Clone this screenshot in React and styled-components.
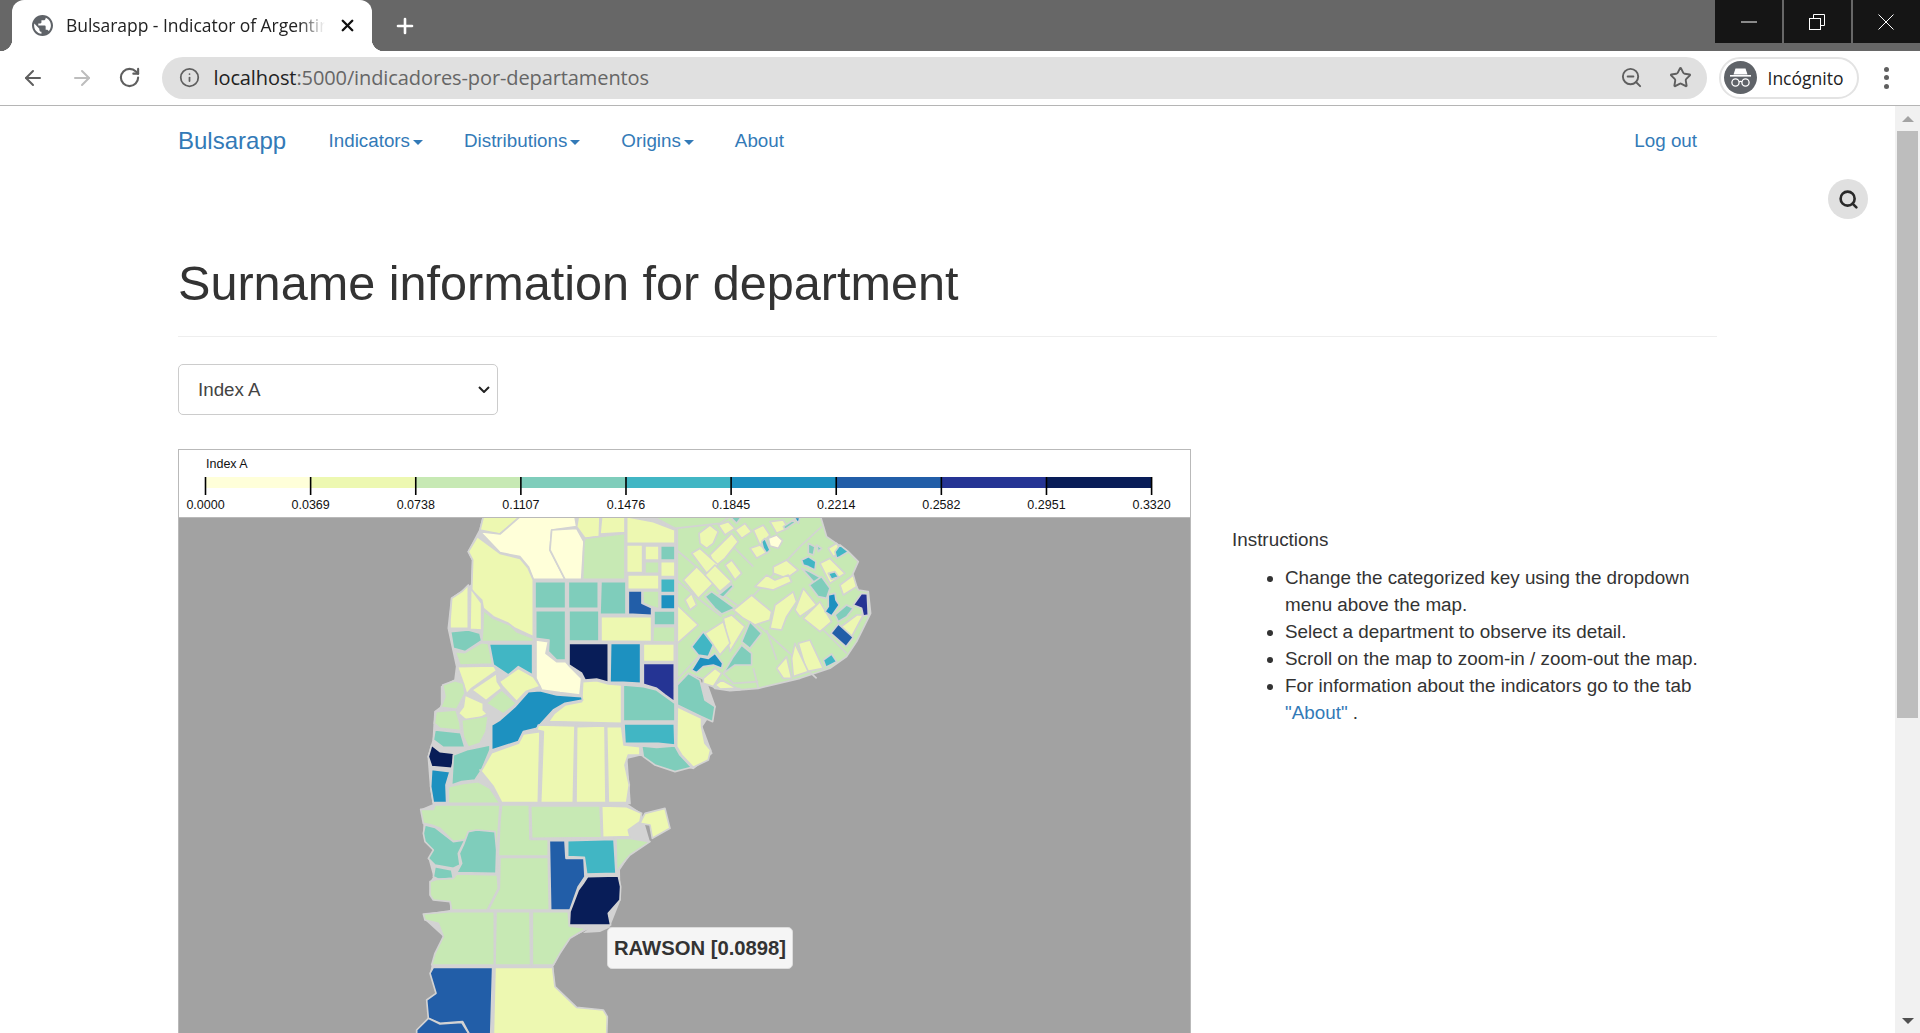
import React from "react";
import styled, { createGlobalStyle } from "styled-components";
import { ArrowLeft, ArrowRight, RotateCw, Info, ZoomOut, Star, Search, Plus, X } from "lucide-react";

const C = { a: "#ffffd9", b: "#edf8b1", c: "#c7e9b4", d: "#7fcdbb", e: "#41b6c4", f: "#1d91c0", g: "#225ea8", h: "#253494", i: "#081d58" };
const RAMP = ["#ffffd9", "#edf8b1", "#c7e9b4", "#7fcdbb", "#41b6c4", "#1d91c0", "#225ea8", "#253494", "#081d58"];
const LABELS = ["0.0000", "0.0369", "0.0738", "0.1107", "0.1476", "0.1845", "0.2214", "0.2582", "0.2951", "0.3320"];

const LAND = "250,20 240,60 205,125 218,150 215,225 155,265 145,355 170,470 165,510 125,530 125,590 105,605 100,690 85,740 92,830 100,880 690,880 680,745 720,735 880,775 935,730 905,650 945,590 920,520 832,520 830,20";
const LAND_SOUTH = "62,118 105,100 680,100 725,130 750,215 690,255 660,300 662,390 630,470 560,480 510,505 480,550 460,590 465,650 530,712 610,720 622,740 620,800 50,800 50,780 85,745 80,690 108,670 90,610 95,585 130,500 75,450 70,432 150,420 150,395 90,375 90,335 100,320 85,265 100,240 70,190 70,160";

const PAMPA_BASE = ["c", "832,20 1262,20 1280,80 1345,125 1375,155 1355,200 1375,240 1405,245 1412,310 1370,395 1340,440 1290,475 1200,505 1075,535 990,542 945,535 925,515 905,505 865,490 832,525"];

const NORTH = [
  ["b", "250,20 360,20 300,72 240,60"],
  ["a", "240,65 300,72 360,20 525,20 530,50 455,60 450,120 495,208 400,208 385,170 360,140 300,128"],
  ["a", "455,60 530,55 552,95 545,208 495,208 450,120"],
  ["b", "535,20 600,20 598,80 555,85 530,50"],
  ["b", "605,20 675,20 675,68 600,72"],
  ["b", "680,20 760,35 825,60 825,100 680,100"],
  ["c", "760,20 990,20 960,40 825,55"],
  ["c", "555,85 675,70 675,208 548,208 552,95"],
  ["b", "680,105 728,105 728,188 680,188"],
  ["b", "735,108 777,108 777,150 735,150"],
  ["d", "782,108 825,108 825,150 782,150"],
  ["c", "735,155 777,155 777,190 735,190"],
  ["b", "782,155 825,155 825,200 782,200"],
  ["b", "683,195 777,195 777,238 683,238"],
  ["e", "782,206 825,206 825,248 782,248"],
  ["f", "782,253 825,253 825,297 782,297"],
  ["c", "728,243 777,243 777,297 755,290 730,280"],
  ["g", "685,243 726,243 726,280 755,293 755,316 685,312"],
  ["d", "762,303 825,303 825,345 762,345"],
  ["c", "760,350 825,350 825,397 758,395"],
  ["b", "603,320 755,320 755,395 603,393"],
  ["d", "405,215 497,215 497,295 405,295"],
  ["d", "505,215 595,215 595,295 505,295"],
  ["d", "603,215 678,215 678,313 600,313"],
  ["d", "407,302 497,302 497,450 470,450 445,425 447,390 407,385"],
  ["d", "507,302 597,302 597,393 507,393"],
  ["b", "232,80 300,130 360,145 385,175 400,210 400,380 345,355 325,340 280,320 250,295 245,270 215,240 218,150 205,125"],
  ["b", "150,330 155,265 185,245 205,225 205,355 150,355"],
  ["b", "212,235 245,280 245,360 210,358"],
  ["c", "250,300 280,325 330,345 350,365 400,385 400,395 245,395 248,360"],
  ["d", "152,365 205,360 240,370 245,392 195,425 160,415"],
  ["c", "165,425 195,428 245,398 265,400 278,462 180,465"],
  ["e", "268,402 398,402 398,495 355,470 325,495 280,465"],
  ["a", "408,390 445,395 438,430 470,455 497,455 510,470 545,505 540,555 480,548 425,540 408,505"],
  ["i", "507,400 625,400 625,517 590,507 555,510 545,490 507,465"],
  ["f", "632,400 722,400 722,520 670,517 630,517"],
  ["b", "730,402 823,402 823,455 730,455"],
  ["h", "730,460 823,460 823,575 795,555 770,535 730,523"],
  ["b", "172,470 282,468 290,482 215,535 200,552 188,515"],
  ["b", "290,490 215,540 258,572 305,535 292,515"],
  ["b", "298,515 355,475 400,500 420,530 378,545 350,575 308,530"],
  ["c", "305,540 350,580 310,612 258,580"],
  ["b", "195,555 250,580 250,600 262,612 210,640 175,610 190,590"],
  ["c", "128,525 165,512 190,520 195,550 170,598 122,592 135,560"],
  ["c", "108,605 168,600 180,640 182,662 120,655 103,640"],
  ["d", "105,660 182,668 195,712 130,712 100,690"],
  ["c", "185,630 265,618 258,665 240,700 205,712 190,680"],
  ["b", "445,635 463,610 495,585 545,575 548,515 590,512 625,522 665,525 665,640"],
  ["f", "275,645 300,630 345,590 385,545 420,542 470,555 545,560 548,570 495,580 460,600 410,655 370,665 355,695 275,720"],
  ["i", "95,705 120,725 165,730 155,775 95,770 85,740"],
  ["f", "95,778 150,785 138,825 140,878 100,878 92,830"],
  ["d", "160,735 205,718 270,705 270,720 245,780 225,810 185,815 155,825"],
  ["b", "245,780 275,728 355,700 370,672 420,665 415,878 305,878 280,830 240,780"],
  ["b", "415,645 525,648 520,878 422,878 430,665 410,660"],
  ["b", "530,650 615,648 618,878 528,878"],
  ["b", "620,650 665,650 672,705 720,710 720,735 685,735 675,765 688,825 680,878 625,878"],
  ["d", "670,525 730,530 770,540 825,580 825,633 670,633"],
  ["e", "672,642 823,642 825,705 775,700 675,700"],
  ["d", "725,708 770,712 825,708 840,735 875,772 825,785 765,765 730,740"],
  ["b", "832,590 905,625 905,650 915,700 932,720 925,750 880,772 845,735 830,710"],
  ["d", "832,525 865,490 900,510 915,570 945,590 938,635 905,620 832,585"],
  ["b", "832,285 895,345 832,400"],
];

const PAMPA_TINTED = [
  ["a", "1105,85 1130,75 1148,92 1135,115 1110,108"],
  ["e", "1085,95 1095,85 1110,120 1100,130 1090,115"],
  ["d", "1150,50 1180,30 1185,38 1155,58"],
  ["f", "1182,22 1200,22 1195,40"],
  ["d", "990,20 1025,20 1010,40"],
  ["e", "1305,125 1320,105 1345,125 1320,140 1310,145"],
  ["e", "1205,150 1225,140 1248,155 1245,180 1225,170 1210,165"],
  ["d", "1205,175 1230,185 1265,205 1245,220"],
  ["d", "1228,225 1265,200 1290,235 1280,265 1255,260"],
  ["d", "1225,100 1245,110 1240,135 1225,130"],
  ["d", "1250,105 1265,115 1255,125"],
  ["e", "1285,190 1305,185 1315,200 1295,208"],
  ["d", "955,255 995,222 1000,230 970,262"],
  ["d", "915,260 935,245 1005,295 965,312 945,295"],
  ["f", "1285,255 1305,250 1308,270 1318,285 1295,318 1275,305 1285,290"],
  ["d", "1305,315 1340,285 1360,295 1340,320 1315,335"],
  ["h", "1360,285 1385,250 1402,252 1405,315 1390,318 1385,295"],
  ["g", "1293,370 1315,342 1360,382 1338,410"],
  ["e", "1270,450 1295,432 1310,455 1278,472"],
  ["d", "1025,395 1050,335 1085,370 1050,415"],
  ["d", "970,490 1000,440 1025,405 1055,430 1055,465 1005,465"],
  ["e", "875,410 910,365 940,405 925,440 895,435"],
  ["f", "875,480 900,440 925,445 945,430 968,460 965,475 940,465 910,470 890,488"],
  ["h", "998,536 1020,536 1020,539 998,539"],
];

const PAMPA_PALE = [
  "117,55 150,30 175,50 160,85 140,100 120,85",
  "150,120 215,55 235,80 195,130 165,155",
  "95,115 120,100 175,150 140,175",
  "70,195 110,155 160,205 115,250",
  "135,180 165,150 215,200 180,230",
  "195,150 215,135 245,175 225,195",
  "280,45 310,30 330,60 300,90",
  "270,100 300,90 325,110 290,130",
  "330,20 370,15 385,40 350,55",
  "340,155 380,135 415,165 380,190 340,175",
  "285,215 320,180 345,195 385,180 395,200 340,225",
  "220,285 275,240 335,290 330,315 285,330 250,310",
  "330,340 345,270 400,230 410,260 380,305 365,345",
  "405,285 430,220 470,270 420,305",
  "430,310 480,260 515,320 480,350",
  "190,310 215,300 255,335 210,410",
  "135,355 190,320 210,385 180,420",
  "480,145 510,130 555,175 510,205",
  "530,345 590,300 610,300 570,375",
  "415,385 450,375 490,460 440,470",
  "350,460 380,425 395,490 370,490",
  "395,430 405,385 445,470 400,485",
  "75,255 95,235 110,270 90,285",
  "130,490 165,460 185,475 160,515 130,505",
  "165,510 185,495 230,520 180,522",
  "225,45 255,25 275,50 245,70",
  "175,30 205,20 225,40 195,60",
  "505,100 530,85 545,110 520,125",
  "540,210 580,180 590,215 550,240",
].map((pts) => [
  "b",
  pts.split(" ").map((p) => {
    const [x, y] = p.split(",").map(Number);
    return `${x + 780},${y + 15}`;
  }).join(" "),
]);

const ROADS = [
  "830,510 905,430 1000,320 1100,215 1200,110 1265,50",
  "1190,280 1290,380 1340,430",
  "1080,350 1180,440 1250,505",
  "950,240 1030,300 1080,350",
  "830,210 900,270 965,320",
  "830,120 895,175",
  "1060,475 1075,535",
  "970,490 1000,520 1075,515",
  "1100,360 1130,450",
  "1000,110 1060,170",
];

const SOUTH = [
  ["c", "145,100 145,50 190,40 235,35 270,55 300,100"],
  ["c", "62,118 100,118 105,105 300,105 290,255 290,308 170,308 190,245 210,185 195,210 160,215 120,175 95,165 70,160"],
  ["d", "70,190 75,165 105,172 160,215 195,210 175,250 180,285 160,295 105,285 85,265 100,240 75,215"],
  ["d", "205,185 230,180 285,185 290,240 288,310 170,308 185,280 178,250 190,225"],
  ["d", "105,290 155,300 160,325 115,328 100,320"],
  ["c", "90,335 110,328 160,325 170,312 292,315 295,355 262,420 155,420 150,395 100,390 90,375"],
  ["c", "305,105 388,105 390,208 445,208 445,258 295,258 300,150"],
  ["c", "392,108 600,108 605,203 395,205"],
  ["b", "605,108 680,110 725,130 720,155 685,180 690,200 608,202"],
  ["b", "735,130 795,115 810,175 757,205 750,165 720,160 725,150"],
  ["c", "648,205 690,205 750,215 690,255 660,290 650,310"],
  ["g", "448,212 495,212 498,265 552,265 555,320 535,350 510,420 452,420"],
  ["e", "503,212 642,208 648,310 560,312 553,262 503,260"],
  ["i", "563,320 655,318 662,350 660,390 625,430 632,465 508,465 510,425 535,360 550,340"],
  ["c", "300,262 445,262 448,420 265,420 298,355"],
  ["c", "70,432 150,425 283,425 283,585 95,585 105,550 130,500 115,460 75,450"],
  ["c", "288,425 390,425 392,585 285,585"],
  ["c", "397,425 505,425 508,468 560,475 510,505 480,550 460,585 397,585"],
  ["g", "100,592 278,592 272,800 212,800 188,755 120,760 85,745 80,690 108,670 90,610"],
  ["g", "50,800 50,780 85,745 120,762 185,757 212,800"],
  ["b", "285,592 458,592 465,650 530,712 610,720 622,740 620,800 280,800"],
];

const GlobalStyle = createGlobalStyle`
  html, body { margin: 0; height: 100%; overflow: hidden; background: #fff; }
  #root { height: 100%; }
  * { box-sizing: border-box; }
`;

const Shell = styled.div`
  height: 100vh;
  display: flex;
  flex-direction: column;
  overflow: hidden;
  font-family: "Liberation Sans", Arial, sans-serif;
  color: #333;
`;
const TabStrip = styled.div`
  height: 51px;
  flex: none;
  background: #676767;
  display: flex;
  padding-left: 12px;
`;
const Tab = styled.div`
  position: relative;
  width: 360px;
  height: 51px;
  background: #fff;
  border-radius: 12px 12px 0 0;
  display: flex;
  align-items: center;
  padding: 0 15px 0 20px;
  gap: 13px;
  &::before, &::after {
    content: "";
    position: absolute;
    bottom: 0;
    width: 12px;
    height: 12px;
  }
  &::before { left: -12px; background: radial-gradient(circle at 0 0, transparent 12px, #fff 12.5px); }
  &::after { right: -12px; background: radial-gradient(circle at 100% 0, transparent 12px, #fff 12.5px); }
`;
const TabTitle = styled.span`
  flex: 1;
  padding-bottom: 2px;
  font: 400 17.5px "Open Sans", sans-serif;
  letter-spacing: -0.05px;
  color: #222;
  white-space: nowrap;
  overflow: hidden;
  -webkit-mask-image: linear-gradient(90deg, #000 90%, transparent 100%);
  mask-image: linear-gradient(90deg, #000 90%, transparent 100%);
`;
const NewTab = styled.div`
  width: 66px;
  display: flex;
  align-items: center;
  justify-content: center;
  color: #fff;
`;
const WindowControls = styled.div`
  margin-left: auto;
  display: flex;
  gap: 2px;
  height: 43px;
`;
const WindowButton = styled.div`
  width: 67px;
  height: 43px;
  padding-right: ${(p) => p.$nudge || 0}px;
  background: #151515;
  display: flex;
  align-items: center;
  justify-content: center;
`;
const Toolbar = styled.div`
  height: 55px;
  flex: none;
  border-bottom: 1px solid #b5b5b5;
  display: flex;
  align-items: center;
  padding: 0 0 1px 21px;
`;
const NavIcon = styled.div`
  width: 24px;
  height: 24px;
  margin-right: 24.5px;
  color: ${(p) => p.$color || "#5f5f5f"};
  display: flex;
`;
const Omnibox = styled.div`
  width: 1545px;
  margin-left: -5px;
  height: 42px;
  border-radius: 21px;
  background: #e0e0e0;
  display: flex;
  align-items: center;
  padding: 0 15px 0 17px;
  color: #5f5f5f;
`;
const Url = styled.div`
  flex: 1;
  margin-left: 14px;
  font: 400 20px "Open Sans", sans-serif;
  color: #666;
  letter-spacing: -0.1px;
  b { font-weight: 400; color: #222; }
`;
const OmniAction = styled.div`
  display: flex;
  margin-left: ${(p) => p.$gap}px;
`;
const IncognitoPill = styled.div`
  width: 140px;
  height: 42px;
  margin-left: 12px;
  border: 2px solid #e3e3e3;
  border-radius: 21px;
  display: flex;
  align-items: center;
  padding-left: 3px;
  gap: 11px;
  font: 400 17.5px "Open Sans", sans-serif;
  color: #222;
`;
const MenuDots = styled.div`
  margin-left: 25px;
  display: flex;
  flex-direction: column;
  gap: 3.5px;
  span { width: 5px; height: 5px; border-radius: 50%; background: #5f5f5f; }
`;
const Viewport = styled.div`
  flex: 1;
  min-height: 0;
  display: flex;
`;
const Page = styled.div`
  position: relative;
  flex: 1;
  min-width: 0;
  overflow: hidden;
  padding-left: 178px;
`;
const Container = styled.div`
  width: 1539px;
`;
const Navbar = styled.nav`
  height: 70px;
  display: flex;
  align-items: center;
  padding-left: 0;
  padding-right: 20px;
`;
const Brand = styled.a`
  font-size: 24px;
  color: #337ab7;
  margin-right: 42.5px;
`;
const NavLink = styled.a`
  font-size: 18.8px;
  color: #337ab7;
  margin-right: ${(p) => p.$gap}px;
  margin-left: ${(p) => (p.$push ? "auto" : "0")};
  display: flex;
  align-items: center;
  ${(p) => p.$caret && `
    &::after {
      content: "";
      margin-left: 3px;
      margin-top: 2px;
      border-top: 5px solid #337ab7;
      border-left: 5px solid transparent;
      border-right: 5px solid transparent;
    }
  `}
`;
const SearchFab = styled.div`
  position: absolute;
  right: 27px;
  top: 73px;
  width: 40px;
  height: 40px;
  border-radius: 50%;
  background: #e0e0e0;
  color: #2a2a2a;
  display: flex;
  align-items: center;
  justify-content: center;
`;
const Title = styled.h1`
  margin: 0;
  padding: 0 0 23px;
  height: 161px;
  display: flex;
  align-items: flex-end;
  font-size: 48.6px;
  font-weight: 400;
  line-height: 60px;
  color: #333;
  border-bottom: 1px solid #eee;
`;
const SelectWrap = styled.div`
  position: relative;
  margin-top: 27px;
  width: 320px;
  height: 51px;
`;
const Select = styled.select`
  display: block;
  appearance: none;
  width: 100%;
  height: 100%;
  border: 1px solid #ccc;
  border-radius: 5px;
  background: #fff;
  padding-left: 19px;
  font: 400 18.75px "Liberation Sans", Arial, sans-serif;
  color: #444;
`;
const Chevron = styled.svg`
  position: absolute;
  right: 8px;
  top: 22px;
  width: 12px;
  height: 7px;
  pointer-events: none;
`;
const ContentRow = styled.div`
  margin-top: 34px;
  display: flex;
  gap: 41px;
`;
const MapFrame = styled.div`
  position: relative;
  width: 1013px;
  flex: none;
  border: 1px solid #b9b9b9;
  border-bottom: 0;
`;
const Legend = styled.svg`
  display: block;
  width: 1011px;
  height: 68px;
  border-bottom: 1px solid #b9b9b9;
  font-family: "Liberation Sans", Arial, sans-serif;
`;
const MapCanvas = styled.svg`
  display: block;
  width: 1011px;
  height: 515px;
  background: #a2a2a2;
`;
const Tooltip = styled.div`
  position: absolute;
  left: 428px;
  top: 477px;
  width: 186px;
  height: 42px;
  background: rgba(247, 247, 247, 0.98);
  border: 1px solid #dcdcdc;
  border-radius: 5px;
  font-size: 20.25px;
  font-weight: 700;
  color: #333;
  display: flex;
  align-items: center;
  justify-content: center;
  white-space: nowrap;
`;
const Panel = styled.div`
  flex: 1;
  padding-top: 77px;
  font-size: 18.85px;
  line-height: 27px;
  color: #333;
`;
const List = styled.ul`
  margin: 11px 0 0;
  padding-left: 53px;
  a { color: #337ab7; }
`;
const ScrollBar = styled.div`
  width: 25px;
  flex: none;
  background: #f1f1f1;
  display: flex;
  flex-direction: column;
  align-items: center;
`;
const ScrollArrow = styled.div`
  height: 25px;
  flex: none;
  display: flex;
  align-items: center;
  justify-content: center;
  ${(p) => (p.$down ? "margin-top: auto;" : "")}
  &::before {
    content: "";
    border-left: 6px solid transparent;
    border-right: 6px solid transparent;
    ${(p) => (p.$down ? "border-top: 6px solid #505050;" : "border-bottom: 6px solid #a3a3a3;")}
  }
`;
const ScrollThumb = styled.div`
  width: 21px;
  height: 587px;
  background: #bdbdbd;
  flex: none;
`;

const Globe = () => (
  <svg width="21" height="21" viewBox="2 2 20 20" fill="#5f6368">
    <path d="M12 2C6.48 2 2 6.48 2 12s4.48 10 10 10 10-4.48 10-10S17.52 2 12 2zm-1 17.93c-3.95-.49-7-3.85-7-7.93 0-.62.08-1.21.21-1.79L9 15v1c0 1.1.9 2 2 2v1.93zm6.9-2.54c-.26-.81-1-1.39-1.9-1.39h-1v-3c0-.55-.45-1-1-1H8v-2h2c.55 0 1-.45 1-1V7h2c1.1 0 2-.9 2-2v-.41c2.93 1.19 5 4.06 5 7.41 0 2.08-.8 3.97-2.1 5.39z" />
  </svg>
);

const Incognito = () => (
  <svg width="33" height="33" viewBox="0 0 33 33">
    <circle cx="16.5" cy="16.5" r="16.5" fill="#5f6368" />
    <path d="M11.5 7.5h10l2 6h-14z" fill="#fff" />
    <rect x="6" y="14" width="21" height="1.6" fill="#fff" />
    <circle cx="11.5" cy="21.5" r="3.6" fill="none" stroke="#fff" strokeWidth="1.3" />
    <circle cx="21.5" cy="21.5" r="3.6" fill="none" stroke="#fff" strokeWidth="1.3" />
    <path d="M15 20.8q1.5-1 3 0" fill="none" stroke="#fff" strokeWidth="1.3" />
  </svg>
);

const Regions = ({ items }) =>
  items.map(([k, pts], i) => (
    <polygon key={i} points={pts} fill={C[k]} stroke="#d3d3d3" strokeWidth="5" strokeLinejoin="round" />
  ));

const step = (1151.6 - 205.5) / 9;

const App = () => (
  <>
    <GlobalStyle />
    <Shell>
      <TabStrip>
        <Tab>
          <Globe />
          <TabTitle>Bulsarapp - Indicator of Argentina</TabTitle>
          <X size={19} strokeWidth={3} color="#111" />
        </Tab>
        <NewTab><Plus size={24} strokeWidth={2.6} /></NewTab>
        <WindowControls>
          <WindowButton>
            <svg width="16" height="2" viewBox="0 0 16 2"><path d="M0 1h16" stroke="#fff" /></svg>
          </WindowButton>
          <WindowButton $nudge={2}>
            <svg width="16" height="16" viewBox="0 0 16 16" fill="none" stroke="#fff">
              <rect x="0.5" y="4.5" width="11" height="11" />
              <path d="M4.5 4.5v-4h11v11h-4" />
            </svg>
          </WindowButton>
          <WindowButton $nudge={2}>
            <svg width="16" height="16" viewBox="0 0 16 16" stroke="#fff"><path d="M.5.5l15 15M15.5.5l-15 15" /></svg>
          </WindowButton>
        </WindowControls>
      </TabStrip>
      <Toolbar>
        <NavIcon><ArrowLeft size={24} strokeWidth={2} /></NavIcon>
        <NavIcon $color="#bdbdbd"><ArrowRight size={24} strokeWidth={2} /></NavIcon>
        <NavIcon><RotateCw size={23} strokeWidth={2.2} /></NavIcon>
        <Omnibox>
          <Info size={21} strokeWidth={2} />
          <Url><b>localhost</b>:5000/indicadores-por-departamentos</Url>
          <OmniAction $gap={24}><ZoomOut size={23} strokeWidth={2} /></OmniAction>
          <OmniAction $gap={26}><Star size={23} strokeWidth={2} /></OmniAction>
        </Omnibox>
        <IncognitoPill><Incognito />Incógnito</IncognitoPill>
        <MenuDots><span /><span /><span /></MenuDots>
      </Toolbar>
      <Viewport>
        <Page>
          <Container>
            <Navbar>
              <Brand>Bulsarapp</Brand>
              <NavLink $caret $gap={41}>Indicators</NavLink>
              <NavLink $caret $gap={41}>Distributions</NavLink>
              <NavLink $caret $gap={41}>Origins</NavLink>
              <NavLink>About</NavLink>
              <NavLink $push>Log out</NavLink>
            </Navbar>
            <Title>Surname information for department</Title>
            <SelectWrap>
              <Select defaultValue="a"><option value="a">Index A</option></Select>
              <Chevron viewBox="0 0 12 7" fill="none" stroke="#222" strokeWidth="2"><path d="M1 1l5 5 5-5" /></Chevron>
            </SelectWrap>
            <ContentRow>
              <MapFrame>
                <Legend viewBox="179 450 1011 67">
                  <text x="206" y="468" fontSize="12.5" fill="#111">Index A</text>
                  {RAMP.map((c, i) => (
                    <rect key={c} x={205.5 + i * step} y="477" width={step} height="11" fill={c} />
                  ))}
                  {LABELS.map((l, i) => (
                    <g key={l}>
                      <line x1={205.5 + i * step} x2={205.5 + i * step} y1="477" y2="495" stroke="#000" strokeWidth="1.6" />
                      <text x={205.5 + i * step} y="508.5" fontSize="12.5" textAnchor="middle" fill="#111">{l}</text>
                    </g>
                  ))}
                </Legend>
                <MapCanvas viewBox="179 518 1011 515">
                  <g transform="translate(400 510) scale(0.3333)">
                    <polygon points={LAND} fill="#d3d3d3" stroke="#d3d3d3" strokeWidth="5" />
                    <Regions items={[PAMPA_BASE]} />
                    {ROADS.map((pts) => (
                      <polyline key={pts} points={pts} fill="none" stroke="#d3d3d3" strokeWidth="5" />
                    ))}
                    <Regions items={PAMPA_PALE} />
                    <Regions items={NORTH} />
                    <Regions items={PAMPA_TINTED} />
                  </g>
                  <g transform="translate(400 770) scale(0.3333)">
                    <polygon points={LAND_SOUTH} fill="#d3d3d3" />
                    <Regions items={SOUTH} />
                  </g>
                  <polygon points="583,933 593,925 611,927 600,932" fill="#d3d3d3" />
                </MapCanvas>
                <Tooltip>RAWSON [0.0898]</Tooltip>
              </MapFrame>
              <Panel>
                Instructions
                <List>
                  <li>Change the categorized key using the dropdown menu above the map.</li>
                  <li>Select a department to observe its detail.</li>
                  <li>Scroll on the map to zoom-in / zoom-out the map.</li>
                  <li>For information about the indicators go to the tab <a>"About"</a> .</li>
                </List>
              </Panel>
            </ContentRow>
          </Container>
          <SearchFab><Search size={21} strokeWidth={3} /></SearchFab>
        </Page>
        <ScrollBar>
          <ScrollArrow />
          <ScrollThumb />
          <ScrollArrow $down />
        </ScrollBar>
      </Viewport>
    </Shell>
  </>
);

export default App;
